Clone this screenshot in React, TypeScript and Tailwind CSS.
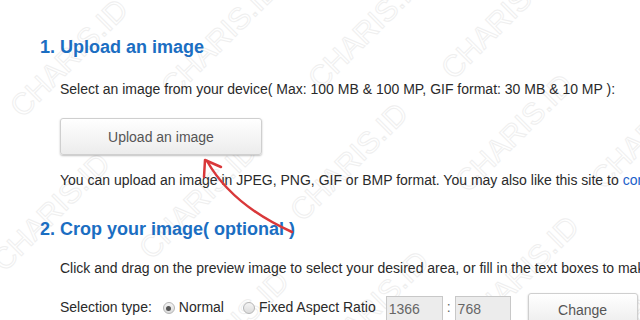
const Mark = ({ className }: { className: string }) => (
  <span
    className={`absolute -translate-x-1/2 -translate-y-1/2 -rotate-45 whitespace-nowrap text-[30px] font-normal text-transparent [-webkit-text-stroke:1px_#efefef] ${className}`}
  >
    CHARIS.ID
  </span>
);

const Radio = ({ checked }: { checked?: boolean }) => (
  <span className="mt-[5px] flex h-[12px] w-[12px] items-center justify-center rounded-full border border-[#b5b5b5] bg-gradient-to-b from-[#f4f4f4] to-[#dcdcdc]">
    {checked && <span className="h-[5px] w-[5px] rounded-full bg-[#555]" />}
  </span>
);

export default function App() {
  return (
    <div className="relative h-[320px] w-[640px] overflow-hidden bg-white font-['Liberation_Sans',Arial,sans-serif] text-[14px] leading-[20px] text-[#2a2a2a]">
      {/* watermark */}
      <div className="pointer-events-none absolute inset-0">
        <Mark className="left-[69px] top-[58px]" />
        <Mark className="left-[220px] top-[38px]" />
        <Mark className="left-[367px] top-[30px]" />
        <Mark className="left-[500px] top-[20px]" />
        <Mark className="left-[51px] top-[212px]" />
        <Mark className="left-[198px] top-[200px]" />
        <Mark className="left-[349px] top-[162px]" />
        <Mark className="left-[514px] top-[133px]" />
        <Mark className="left-[650px] top-[130px]" />
        <Mark className="left-[230px] top-[330px]" />
        <Mark className="left-[370px] top-[310px]" />
        <Mark className="left-[520px] top-[275px]" />
        <Mark className="left-[640px] top-[310px]" />
      </div>

      <div className="relative flex flex-col whitespace-nowrap pl-[40px] pt-[35px]">
        <h2 className="text-[18px] font-bold leading-[24px] text-[#1b6ec2]">1. Upload an image</h2>
        <div className="ml-[20px] mt-[20px]">
          Select an image from your device( Max: 100 MB &amp; 100 MP, GIF format: 30 MB &amp; 10 MP ):
        </div>
        <button className="ml-[20px] mt-[19px] h-[37px] w-[202px] rounded-[3px] border border-[#cfcfcf] bg-gradient-to-b from-white to-[#ececec] text-[#555] shadow-[0_1px_2px_rgba(0,0,0,0.25)]">
          Upload an image
        </button>
        <div className="ml-[20px] mt-[15px]">
          You can upload an image in JPEG, PNG, GIF or BMP format. You may also like this site to{" "}
          <span className="text-[#1b5fc9]">compress image</span>
        </div>

        <h2 className="mt-[27px] text-[18px] font-bold leading-[24px] text-[#1b6ec2]">2. Crop your image( optional )</h2>
        <div className="ml-[20px] mt-[17px]">
          Click and drag on the preview image to select your desired area, or fill in the text boxes to make a precise selection.
        </div>

        <div className="ml-[20px] mt-[15px] flex items-start">
          <span className="mt-[4px]">Selection type:</span>
          <span className="ml-[11px] mt-[4px] flex gap-[4px]">
            <Radio checked />
            <span>Normal</span>
          </span>
          <span className="ml-[19px] mt-[4px] flex gap-[4px]">
            <Radio />
            <span>Fixed Aspect Ratio</span>
          </span>
          <span className="ml-[10px] mt-[3px] h-[26px] w-[57px] border border-[#c8c8c8] bg-[#ececec] pl-[2px] leading-[24px] text-[#666]">1366</span>
          <span className="mx-[4px] mt-[4px] text-[#666]">:</span>
          <span className="mt-[3px] h-[26px] w-[56px] border border-[#c8c8c8] bg-[#ececec] pl-[2px] leading-[24px] text-[#666]">768</span>
          <button className="ml-[17px] h-[34px] w-[110px] rounded-[3px] border border-[#cfcfcf] bg-gradient-to-b from-white to-[#ececec] text-[#555] shadow-[0_1px_2px_rgba(0,0,0,0.25)]">
            Change
          </button>
        </div>
      </div>

      {/* red arrow annotation */}
      <svg className="pointer-events-none absolute left-0 top-0" width="640" height="320" viewBox="0 0 640 320">
        <path d="M292 232 Q232 205 207 161" fill="none" stroke="#d9383a" strokeWidth="2.5" strokeLinecap="round" />
        <path d="M221 167 L205 160 L204 177" fill="none" stroke="#d9383a" strokeWidth="2.5" strokeLinecap="round" strokeLinejoin="round" />
      </svg>
    </div>
  );
}
